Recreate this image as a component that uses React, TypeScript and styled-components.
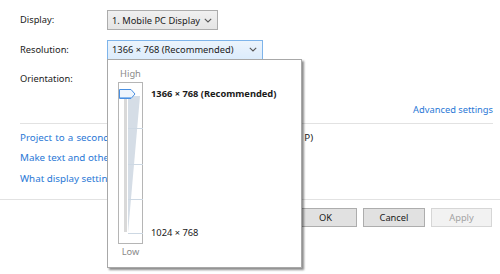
import React from 'react';
import styled, {createGlobalStyle} from "styled-components";

const GlobalStyle = createGlobalStyle`
    html, body {
        margin: 0;
        padding: 0;
        background: #ffffff;
    }

    body {
        font-family: "Noto Sans", "Open Sans", sans-serif;
        font-size: 9.3px;
        color: #1a1a1a;
    }
`;

const Chevron = () => (
    <svg width="8" height="5" viewBox="0 0 8 5">
        <polyline points="0.8,0.8 4,4 7.2,0.8" fill="none" stroke="#555" strokeWidth="1.1"/>
    </svg>
);

const ResolutionSlider = () => (
    <svg width="25" height="162" viewBox="0 0 25 162">
        <rect x="0.5" y="0.5" width="24" height="161" fill="none" stroke="#6a6a6a" strokeDasharray="1 1"/>
        <rect x="6" y="16" width="3" height="134" fill="#d9d9d9"/>
        <polygon points="10,14 22,14 10,151" fill="#d5dde6"/>
        {[46, 82, 117, 151].map(y => (
            <line key={y} x1="10" y1={y + 0.5} x2="25" y2={y + 0.5} stroke="#cdd8e3"/>
        ))}
        <polygon points="1.5,7.5 13,7.5 17,12 13,16.5 1.5,16.5" fill="#eef5fd" stroke="#4a90e2"/>
        <line x1="2" y1="15.5" x2="13" y2="15.5" stroke="#8dbbee"/>
    </svg>
);

export default function App() {
    return (
        <Page>
            <GlobalStyle/>
            <Content>
                <FieldRow>
                    <Label>Display:</Label>
                    <Combo width={111}>
                        <span>1. Mobile PC Display</span>
                        <Chevron/>
                    </Combo>
                </FieldRow>
                <FieldRow>
                    <Label>Resolution:</Label>
                    <Combo width={156} hot>
                        <span>1366 × 768 (Recommended)</span>
                        <Chevron/>
                    </Combo>
                </FieldRow>
                <FieldRow>
                    {/* the orientation box sits under the open drop-down */}
                    <Label>Orientation:</Label>
                </FieldRow>

                <AdvancedRow>
                    <Link>Advanced settings</Link>
                </AdvancedRow>
                <Separator/>

                <LinkList>
                    <LinkItem spaced><Link>Project to a second screen</Link> (or press the Windows logo key + P)</LinkItem>
                    <LinkItem><Link>Make text and other items larger or smaller</Link></LinkItem>
                    <LinkItem><Link>What display settings should I choose?</Link></LinkItem>
                </LinkList>
            </Content>

            <Footer>
                <Button width={63}>OK</Button>
                <Button width={62}>Cancel</Button>
                <Button width={61} disabled>Apply</Button>
            </Footer>

            <Popup>
                <HighLow>High</HighLow>
                <SliderCell>
                    <ResolutionSlider/>
                </SliderCell>
                <StepLabels>
                    <strong>1366 × 768 (Recommended)</strong>
                    <span>1024 × 768</span>
                </StepLabels>
                <HighLow>Low</HighLow>
            </Popup>
        </Page>
    );
}

const Page = styled.div`
    position: relative;
    width: 500px;
    height: 274px;
    overflow: hidden;
    background: #fff;
`;

const Content = styled.div`
    display: flex;
    flex-direction: column;
    padding: 10px 7px 0 20px;
    height: 189px;
`;

const FieldRow = styled.div`
    display: grid;
    grid-template-columns: 87px auto;
    align-items: center;
    height: 20px;
    margin-bottom: 9.5px;
`;

const Label = styled.span`
    line-height: 14px;
`;

const Combo = styled.div<{ width: number; hot?: boolean }>`
    box-sizing: border-box;
    width: ${p => p.width}px;
    height: 20px;
    display: flex;
    align-items: center;
    justify-content: space-between;
    padding: 0 5px 0 4px;
    border: 1px solid ${p => p.hot ? '#7eb4ea' : '#acacac'};
    background: ${p => p.hot ? 'linear-gradient(#ecf4fc, #dcecfc)' : 'linear-gradient(#f0f0f0, #e5e5e5)'};
    white-space: nowrap;
`;

const AdvancedRow = styled.div`
    display: flex;
    justify-content: flex-end;
    margin-top: 4px;
    line-height: 14px;
`;

const Link = styled.span`
    color: #2a78d6;
`;

const Separator = styled.div`
    height: 1px;
    background: #e2e2e2;
    margin-top: 6px;
`;

const LinkList = styled.ul`
    list-style: none;
    margin: 7px 0 0;
    padding: 0;
    display: flex;
    flex-direction: column;
    gap: 6.5px;
    font-size: 9.8px;
`;

const LinkItem = styled.li<{ spaced?: boolean }>`
    line-height: 14px;
    white-space: nowrap;
    word-spacing: ${p => p.spaced ? '0.6px' : 'normal'};
`;

const Footer = styled.div`
    display: flex;
    justify-content: flex-end;
    gap: 6px;
    border-top: 1px solid #e2e2e2;
    padding: 8px 8px 0 0;
`;

const Button = styled.button<{ width: number }>`
    box-sizing: border-box;
    width: ${p => p.width}px;
    height: 19px;
    padding: 0;
    font: inherit;
    color: #1a1a1a;
    border: 1px solid #adadad;
    background: #e1e1e1;

    &:disabled {
        color: #a3a3a3;
        border-color: #d6d6d6;
        background: #f2f2f2;
    }
`;

const Popup = styled.div`
    position: absolute;
    left: 107px;
    top: 59px;
    box-sizing: border-box;
    width: 195px;
    height: 209px;
    background: #fff;
    border: 1px solid #a8a8a8;
    box-shadow: 2px 2px 2px rgba(0, 0, 0, 0.45);
    display: grid;
    grid-template-columns: 25px auto;
    grid-template-rows: 14px 162px 14px;
    row-gap: 1px;
    column-gap: 8px;
    padding: 7px 0 0 10px;
`;

const HighLow = styled.span`
    grid-column: 1;
    text-align: center;
    line-height: 14px;
    color: #8a8a8a;
`;

const SliderCell = styled.div`
    grid-column: 1;
    display: flex;
`;

const StepLabels = styled.div`
    grid-column: 2;
    grid-row: 2;
    display: flex;
    flex-direction: column;
    justify-content: space-between;
    padding: 5px 0 4px;
    line-height: 14px;
    white-space: nowrap;

    strong {
        font-weight: 700;
    }
`;
